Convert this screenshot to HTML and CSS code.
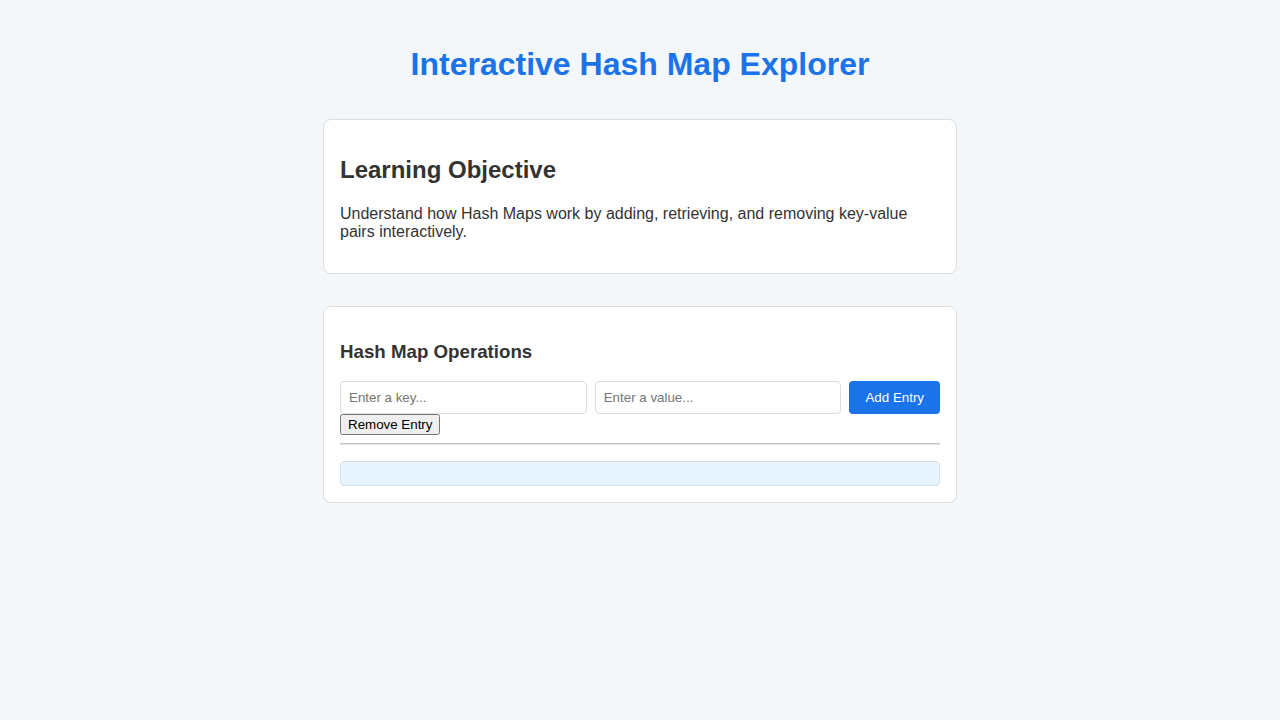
FILE: index.html
```html
<!DOCTYPE html>
<html lang="en">
<head>
<meta charset="utf-8">
<title>Interactive Hash Map Explorer</title>
<link rel="stylesheet" href="styles.css">
</head>
<body>
<div class="container">
  <h1 class="title">Interactive Hash Map Explorer</h1>
  <section class="card">
    <h2 class="card-heading">Learning Objective</h2>
    <p class="card-text">Understand how Hash Maps work by adding, retrieving, and removing key-value pairs interactively.</p>
  </section>
  <section class="card">
    <h3 class="card-subheading">Hash Map Operations</h3>
    <div class="input-row">
      <input class="text-input" type="text" placeholder="Enter a key...">
      <input class="text-input" type="text" placeholder="Enter a value...">
      <button class="primary-btn">Add Entry</button>
    </div>
    <button class="plain-btn">Remove Entry</button>
    <hr class="divider">
    <div class="output-box"></div>
  </section>
</div>
</body>
</html>
```

FILE: styles.css
```css
html, body {
  margin: 0;
  padding: 0;
}
body {
  background: #f4f7fa;
  font-family: "Liberation Sans", Arial, sans-serif;
  color: #333333;
}
.container {
  width: 634px;
  margin: 0 auto;
  padding-top: 45.5px;
}
.title {
  margin: 0 0 36.5px;
  font-size: 32px;
  font-weight: bold;
  color: #1a73e8;
  text-align: center;
}
.card {
  background: #ffffff;
  border: 1px solid #dddddd;
  border-radius: 8px;
  padding: 16px;
  margin-bottom: 32px;
}
.card-heading {
  font-size: 24px;
  margin: 19.92px 0 21px;
}
.card-text {
  font-size: 16px;
  margin: 16px 0;
}
.card-subheading {
  font-size: 18.72px;
  margin: 17.72px 0 18.72px;
}
.input-row {
  display: flex;
  gap: 8px;
}
.text-input {
  flex: 1;
  min-width: 0;
  padding: 8px;
  border: 1px solid #dddddd;
  border-radius: 4px;
  font-family: "Liberation Sans", Arial, sans-serif;
  font-size: 13.333px;
  color: #333333;
  background: #ffffff;
}
.text-input::placeholder {
  color: #757575;
}
.primary-btn {
  padding: 8px 16px;
  border: none;
  border-radius: 4px;
  background: #1a73e8;
  color: #ffffff;
  font-family: "Liberation Sans", Arial, sans-serif;
  font-size: 13.333px;
  cursor: pointer;
}
.plain-btn {
  font-family: "Liberation Sans", Arial, sans-serif;
  font-size: 13.333px;
  display: block;
}
.divider {
  height: 0;
  margin: 8px 0;
  border: none;
  border-top: 1px solid #c4c4c4;
  border-bottom: 1px solid #e4e4e4;
}
.output-box {
  margin-top: 16px;
  padding: 11.5px 12px;
  background: #e8f4fd;
  border: 1px solid #d3dde6;
  border-radius: 4px;
}
```
